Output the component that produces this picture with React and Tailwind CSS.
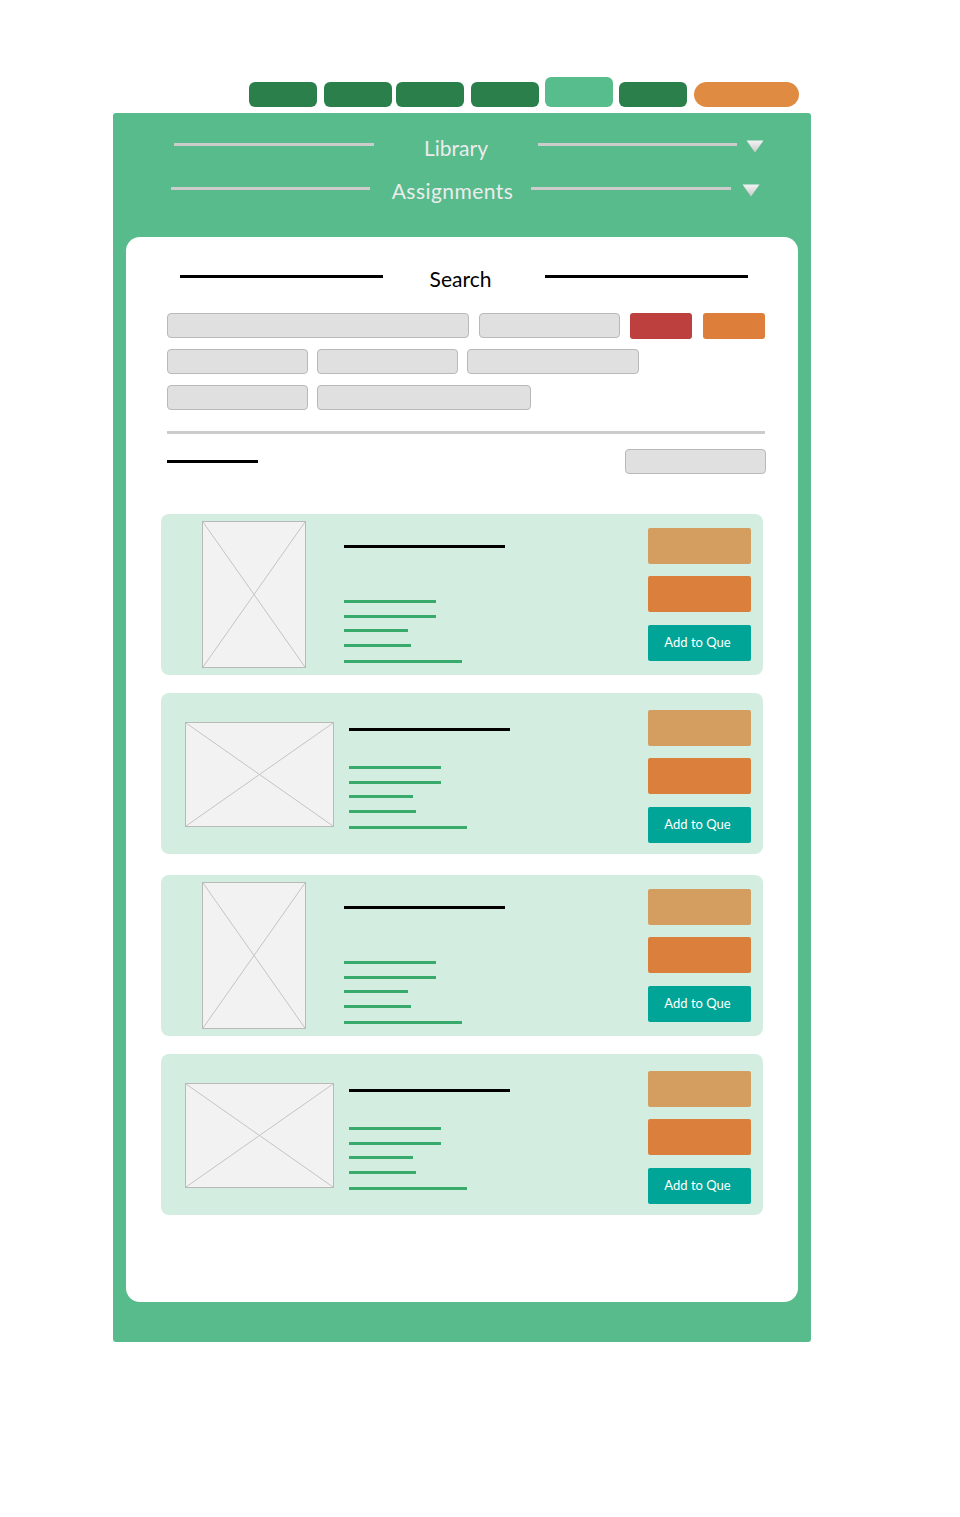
import React from "react";

const font = { fontFamily: "Lato, 'Open Sans', 'Liberation Sans', sans-serif" };

function Triangle() {
  return (
    <svg width="18" height="13" viewBox="0 0 18 13" className="shrink-0">
      <defs>
        <linearGradient id="tg" x1="0" y1="0" x2="0" y2="1">
          <stop offset="0" stopColor="#f4f4f4" />
          <stop offset="1" stopColor="#c9c9c9" />
        </linearGradient>
      </defs>
      <polygon points="0.5,0.5 17.5,0.5 9,12.5" fill="url(#tg)" />
    </svg>
  );
}

function Placeholder({ w, h }) {
  return (
    <div className="shrink-0 border border-[#b9b9b9] bg-[#f2f2f2]" style={{ width: w, height: h }}>
      <svg width="100%" height="100%" viewBox={`0 0 ${w - 2} ${h - 2}`} preserveAspectRatio="none" className="block">
        <line x1="0" y1="0" x2={w - 2} y2={h - 2} stroke="#c4c4c4" strokeWidth="1" />
        <line x1={w - 2} y1="0" x2="0" y2={h - 2} stroke="#c4c4c4" strokeWidth="1" />
      </svg>
    </div>
  );
}

function Field({ w }) {
  return <div className="h-[25px] rounded-[4px] border border-[#b9b9b9] bg-[#e0e0e0]" style={{ width: w }} />;
}

function Card({ portrait, mt }) {
  return (
    <div className="flex h-[161px] w-[602px] rounded-lg bg-[#d3eee1]" style={{ marginTop: mt }}>
      {portrait ? (
        <div className="ml-[41px] mt-[7px]">
          <Placeholder w={104} h={147} />
        </div>
      ) : (
        <div className="ml-[24px] mt-[29px]">
          <Placeholder w={149} h={105} />
        </div>
      )}
      <div className={`flex flex-col ${portrait ? "ml-[38px] pt-[31px]" : "ml-[15px] pt-[35px]"}`}>
        <div className="h-[3px] w-[161px] bg-black" />
        <div className={`flex flex-col ${portrait ? "mt-[52px]" : "mt-[35px]"}`}>
          <div className="h-[3px] w-[92px] bg-[#38aa6c]" />
          <div className="mt-[12px] h-[3px] w-[92px] bg-[#38aa6c]" />
          <div className="mt-[11px] h-[3px] w-[64px] bg-[#38aa6c]" />
          <div className="mt-[12px] h-[3px] w-[67px] bg-[#38aa6c]" />
          <div className="mt-[13px] h-[3px] w-[118px] bg-[#38aa6c]" />
        </div>
      </div>
      <div className="flex-1" />
      <div className={`mr-[12px] flex w-[103px] flex-col gap-[12px] ${portrait ? "pt-[14px]" : "pt-[17px]"}`}>
        <div className="h-[36px] rounded-[2px] bg-[#d59e61]" />
        <div className="h-[36px] rounded-[2px] bg-[#db7f3d]" />
        <div
          className="mt-[1px] flex h-[36px] items-center justify-center rounded-[2px] bg-[#00a597] pb-[1px] pr-[4px] text-[13px] text-white"
          style={font}
        >
          Add to Que
        </div>
      </div>
    </div>
  );
}

export default function App() {
  return (
    <div className="min-h-[1517px] w-[960px] bg-white pt-[77px]" style={font}>
      <div className="ml-[113px] w-[698px]">
        {/* Tabs */}
        <div className="ml-[136px] flex h-[30px] items-end">
          <div className="h-[25px] w-[68px] rounded-[6px] bg-[#2a7f4b]" />
          <div className="ml-[7px] h-[25px] w-[68px] rounded-[6px] bg-[#2a7f4b]" />
          <div className="ml-[4px] h-[25px] w-[68px] rounded-[6px] bg-[#2a7f4b]" />
          <div className="ml-[7px] h-[25px] w-[68px] rounded-[6px] bg-[#2a7f4b]" />
          <div className="ml-[6px] h-[30px] w-[68px] rounded-[6px] bg-[#58bd8d]" />
          <div className="ml-[6px] h-[25px] w-[68px] rounded-[6px] bg-[#2a7f4b]" />
          <div className="ml-[7px] h-[25px] w-[105px] rounded-full bg-[#e08b42]" />
        </div>

        {/* Green panel */}
        <div className="mt-[6px] rounded-[3px] bg-[#58bb8c] px-[13px] pb-[40px] pt-[19px]">
          <div className="ml-[48px] flex h-[30px] items-center">
            <div className="mb-[5px] h-[3px] w-[200px] bg-[#cccccc]" />
            <div className="flex w-[164px] justify-center text-[21px] leading-none text-[#ececec]">Library</div>
            <div className="mb-[5px] h-[3px] w-[199px] bg-[#cccccc]" />
            <div className="ml-[9px] mt-[-1px]">
              <Triangle />
            </div>
          </div>
          <div className="ml-[45px] mt-[13px] flex h-[30px] items-center">
            <div className="mb-[3px] h-[3px] w-[199px] bg-[#cccccc]" />
            <div className="flex w-[161px] justify-center pl-[4px] text-[21px] leading-none tracking-[0.45px] text-[#ececec]">
              Assignments
            </div>
            <div className="mb-[3px] h-[3px] w-[200px] bg-[#cccccc]" />
            <div className="ml-[11px] mt-[1px]">
              <Triangle />
            </div>
          </div>

          {/* White card */}
          <div className="mt-[32px] rounded-[14px] bg-white pb-[87px] pt-[25px]">
            <div className="ml-[54px] flex h-[30px] items-center">
              <div className="mb-[2px] h-[3px] w-[203px] bg-black" />
              <div className="flex w-[162px] justify-center pr-[7px] pt-[3px] text-[21px] leading-none text-black">
                Search
              </div>
              <div className="mb-[2px] h-[3px] w-[203px] bg-black" />
            </div>

            <div className="ml-[41px] mt-[21px] flex flex-col">
              <div className="flex">
                <Field w={302} />
                <div className="ml-[10px]">
                  <Field w={141} />
                </div>
                <div className="ml-[10px] h-[26px] w-[62px] rounded-[3px] bg-[#be403e]" />
                <div className="ml-[11px] h-[26px] w-[62px] rounded-[3px] bg-[#dd7e3b]" />
              </div>
              <div className="mt-[10px] flex gap-[9px]">
                <Field w={141} />
                <Field w={141} />
                <Field w={172} />
              </div>
              <div className="mt-[11px] flex gap-[9px]">
                <Field w={141} />
                <Field w={214} />
              </div>
              <div className="mt-[21px] h-[3px] w-[598px] bg-[#cccccc]" />
              <div className="mt-[15px] flex w-[599px] items-center justify-between">
                <div className="h-[3px] w-[91px] bg-black" />
                <Field w={141} />
              </div>
            </div>

            <div className="ml-[35px] mt-[40px] flex flex-col">
              <Card portrait mt={0} />
              <Card mt={18} />
              <Card portrait mt={21} />
              <Card mt={18} />
            </div>
          </div>
        </div>
      </div>
    </div>
  );
}
